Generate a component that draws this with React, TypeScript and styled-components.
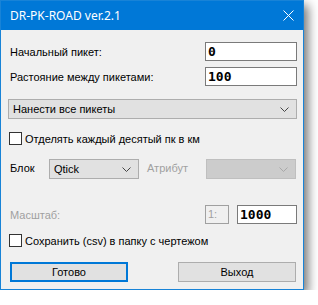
import React from 'react';
import styled, { createGlobalStyle } from 'styled-components';

const GlobalStyle = createGlobalStyle`
  body {
    margin: 0;
    background: #ffffff;
    font-family: 'Liberation Sans', Arial, sans-serif;
  }
`;

const Window = styled.div`
  width: 304px;
  height: 290px;
  box-sizing: border-box;
  border: 1px solid #1883d7;
  background: #f0f0f0;
  box-shadow: 4px 5px 10px rgba(0, 0, 0, 0.55);
  display: flex;
  flex-direction: column;
`;

const TitleBar = styled.div`
  height: 29px;
  background: #0078d7;
  color: #ffffff;
  display: flex;
  align-items: center;
  justify-content: space-between;
  padding: 0 9px 0 9px;
  font-family: 'Noto Sans', 'Open Sans', sans-serif;
  font-size: 12px;
`;

const Content = styled.div`
  flex: 1;
  display: flex;
  flex-direction: column;
  padding: 12px 6px 0 7px;
  font-size: 11px;
  color: #000000;
`;

const FieldRow = styled.div<{ $mt?: number }>`
  display: flex;
  align-items: center;
  justify-content: space-between;
  margin-top: ${(p) => p.$mt ?? 0}px;
  padding-left: 2px;
`;

const Label = styled.span<{ $disabled?: boolean }>`
  color: ${(p) => (p.$disabled ? '#a0a0a0' : '#000000')};
  white-space: nowrap;
`;

const NumInput = styled.div<{ $w?: number }>`
  width: ${(p) => p.$w ?? 92}px;
  height: 19px;
  box-sizing: border-box;
  border: 1px solid #7a7a7a;
  background: #ffffff;
  font-family: 'DejaVu Sans Mono', monospace;
  font-weight: bold;
  font-size: 13px;
  line-height: 17px;
  padding-left: 2px;
`;

const Combo = styled.div<{ $w?: number; $disabled?: boolean; $mt?: number }>`
  width: ${(p) => (p.$w ? `${p.$w}px` : '100%')};
  height: 20px;
  box-sizing: border-box;
  margin-top: ${(p) => p.$mt ?? 0}px;
  border: 1px solid ${(p) => (p.$disabled ? '#bfbfbf' : '#adadad')};
  background: ${(p) => (p.$disabled ? '#cccccc' : '#e1e1e1')};
  display: flex;
  align-items: center;
  justify-content: space-between;
  padding: 0 7px 0 4px;
  font-size: 11px;
`;

const CheckRow = styled.div<{ $mt?: number }>`
  display: flex;
  align-items: center;
  gap: 3px;
  margin-top: ${(p) => p.$mt ?? 0}px;
  padding-left: 1px;
  height: 13px;
`;

const Box = styled.span`
  width: 13px;
  height: 13px;
  box-sizing: border-box;
  border: 1px solid #333333;
  background: #ffffff;
`;

const BlockRow = styled.div`
  display: flex;
  align-items: flex-start;
  margin-top: 14px;
  padding-left: 2px;
`;

const BlockLabel = styled(Label)<{ $w: number; $ml?: number }>`
  width: ${(p) => p.$w}px;
  margin-top: 3px;
  margin-left: ${(p) => p.$ml ?? 0}px;
`;

const ScaleGroup = styled.div`
  display: flex;
  gap: 8px;
`;

const ScaleBox = styled.div`
  width: 24px;
  height: 19px;
  box-sizing: border-box;
  border: 1px solid #a0a0a0;
  color: #a0a0a0;
  font-size: 11px;
  line-height: 17px;
  padding-left: 2px;
`;

const Buttons = styled.div`
  display: flex;
  justify-content: space-between;
  margin-top: 15px;
  padding: 0 1px 0 2px;
`;

const Button = styled.div<{ $focused?: boolean }>`
  width: 118px;
  height: 20px;
  box-sizing: border-box;
  border: ${(p) => (p.$focused ? '2px solid #0078d7' : '1px solid #adadad')};
  background: #e1e1e1;
  display: flex;
  align-items: center;
  justify-content: center;
  font-size: 11px;
`;

const Chevron = ({ color = '#444' }: { color?: string }) => (
  <svg width="9" height="5" viewBox="0 0 9 5">
    <polyline points="0.5,0.5 4.5,4.5 8.5,0.5" fill="none" stroke={color} strokeWidth="1" />
  </svg>
);

export default function App() {
  return (
    <>
      <GlobalStyle />
      <Window>
        <TitleBar>
          <span>DR-PK-ROAD ver.2.1</span>
          <svg width="11" height="11" viewBox="0 0 11 11">
            <path d="M0.5 0.5 L10.5 10.5 M10.5 0.5 L0.5 10.5" stroke="#fff" strokeWidth="1" />
          </svg>
        </TitleBar>
        <Content>
          <FieldRow>
            <Label>Начальный пикет:</Label>
            <NumInput>0</NumInput>
          </FieldRow>
          <FieldRow $mt={6}>
            <Label>Растояние между пикетами:</Label>
            <NumInput>100</NumInput>
          </FieldRow>
          <Combo $mt={13}>
            <span>Нанести все пикеты</span>
            <Chevron />
          </Combo>
          <CheckRow $mt={13}>
            <Box />
            <Label>Отделять каждый десятый пк в км</Label>
          </CheckRow>
          <BlockRow>
            <BlockLabel $w={39}>Блок</BlockLabel>
            <Combo $w={90}>
              <span>Qtick</span>
              <Chevron />
            </Combo>
            <BlockLabel $w={59} $ml={8} $disabled>
              Атрибут
            </BlockLabel>
            <Combo $w={90} $disabled>
              <span />
              <Chevron color="#a8a8a8" />
            </Combo>
          </BlockRow>
          <FieldRow $mt={26}>
            <Label $disabled>Масштаб:</Label>
            <ScaleGroup>
              <ScaleBox>1:</ScaleBox>
              <NumInput $w={60}>1000</NumInput>
            </ScaleGroup>
          </FieldRow>
          <CheckRow $mt={10}>
            <Box />
            <Label>Сохранить (csv) в папку с чертежом</Label>
          </CheckRow>
          <Buttons>
            <Button $focused>Готово</Button>
            <Button>Выход</Button>
          </Buttons>
        </Content>
      </Window>
    </>
  );
}
